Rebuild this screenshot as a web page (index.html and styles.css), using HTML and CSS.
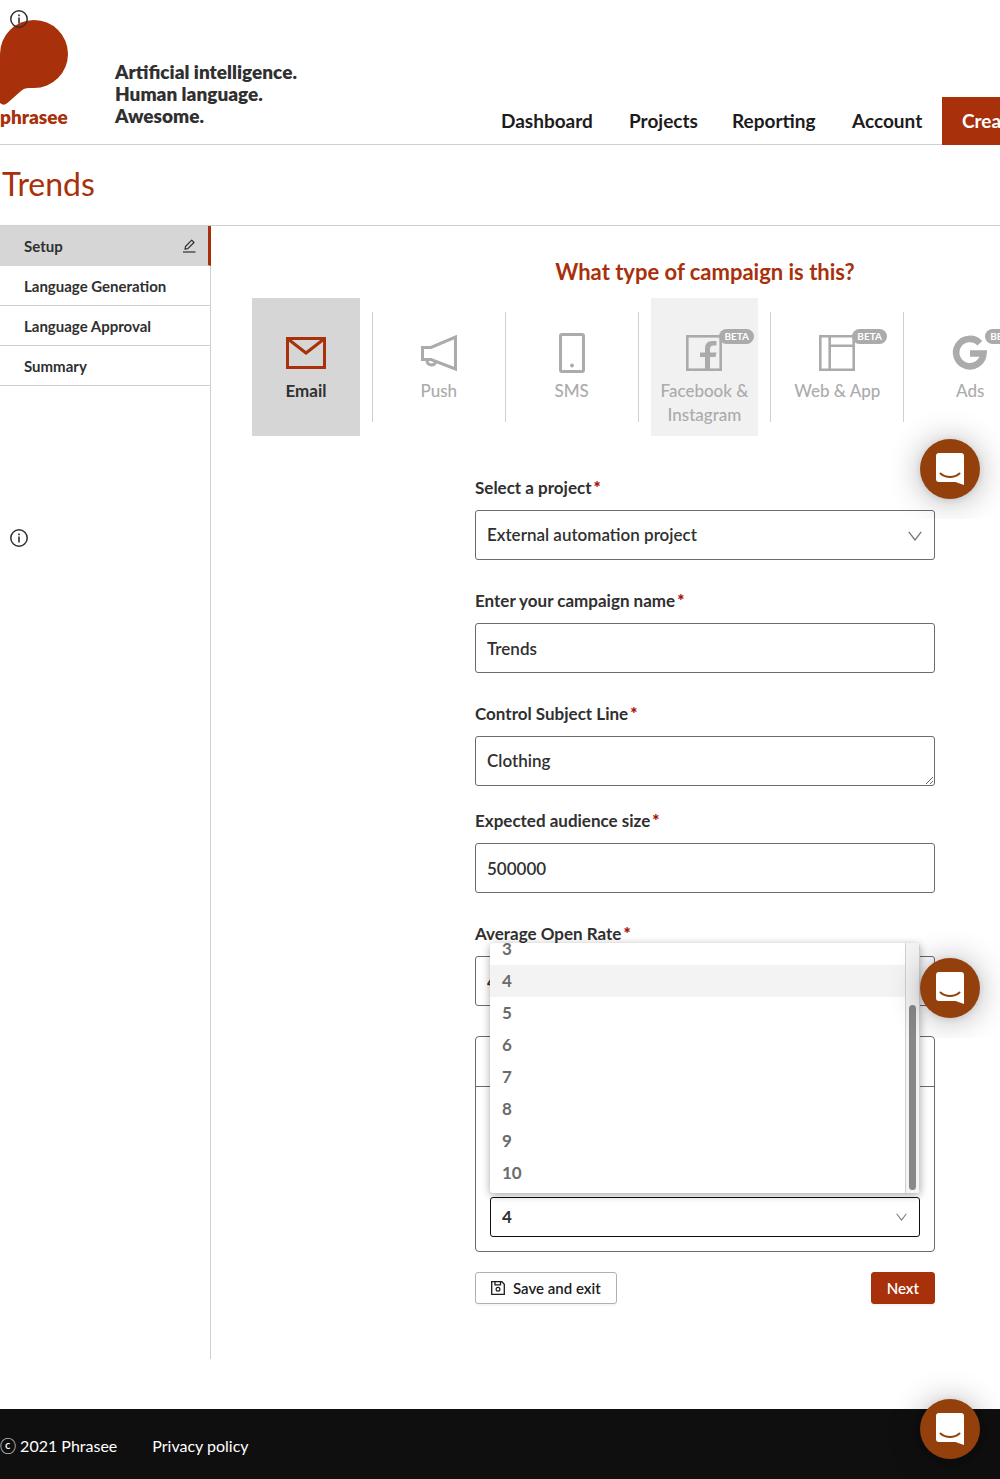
FILE: index.html
```html
<!DOCTYPE html>
<html lang="en">
<head>
<meta charset="utf-8">
<meta name="viewport" content="width=device-width, initial-scale=1">
<title>Trends - Phrasee</title>
<link rel="stylesheet" href="styles.css">
</head>
<body>
<svg class="sprite" aria-hidden="true">
  <symbol id="chat" viewBox="0 0 28 32"><path fill="#fff" d="M3 0H25a3 3 0 0 1 3 3V32L19.500 29H3a3 3 0 0 1-3-3V3a3 3 0 0 1 3-3z"/><path d="M4.500 20.500C10 25.200 18 25.200 23.500 20.500" fill="none" stroke="#94400c" stroke-width="2" stroke-linecap="round"/></symbol>
  <symbol id="info" viewBox="0 0 18 18"><circle cx="9" cy="9" r="8.200" fill="none" stroke="currentColor" stroke-width="1.500"/><path d="M9 7.500V13.500M9 4.500V6.200" stroke="currentColor" stroke-width="1.600"/></symbol>
  <symbol id="chevron" viewBox="0 0 14 10"><path d="M.8.8 7 9 13.200.8" fill="none" stroke="currentColor" stroke-width="1.300"/></symbol>
</svg>
<div class="viewport">
  <div class="app">
    <header class="header">
      <a class="logo" href="#">
        <svg width="68" height="86" viewBox="0 0 68 86" aria-hidden="true"><path fill="currentColor" d="M34 0A34 34 0 0 1 34 68H29Q24 68 21 71L8 82.500Q4 86.500 0 83V34A34 34 0 0 1 34 0Z"/></svg>
        <span class="logo-name">phrasee</span>
      </a>
      <p class="tagline">Artificial intelligence.<br>Human language.<br>Awesome.</p>
      <nav class="nav">
        <a href="#">Dashboard</a>
        <a href="#">Projects</a>
        <a href="#">Reporting</a>
        <a href="#">Account</a>
        <a class="nav-create" href="#">Create</a>
      </nav>
    </header>

    <h1 class="title">Trends</h1>

    <div class="body">
      <aside class="steps">
        <a class="step step-active" href="#">Setup
          <svg width="14" height="14" viewBox="0 0 14 14" aria-hidden="true"><path d="M3 10.200 3.500 7.500 9.700 1.200 12 3.500 5.800 9.700Z" fill="none" stroke="currentColor" stroke-width="1.200" stroke-linejoin="round"/><path d="M1 13H13.500" stroke="currentColor" stroke-width="1.200"/></svg>
        </a>
        <a class="step" href="#">Language Generation</a>
        <a class="step" href="#">Language Approval</a>
        <a class="step" href="#">Summary</a>
      </aside>

      <main class="main">
        <h2 class="question">What type of campaign is this?</h2>
        <ul class="types">
          <li><button class="type type-selected" type="button">
            <span class="type-icon"><svg width="40" height="40" viewBox="0 0 40 40"><path d="M1.500 5.500H38.500V34.500H1.500ZM2 6 20 20 38 6" fill="none" stroke="currentColor" stroke-width="3"/></svg></span>Email</button></li>
          <li><button class="type" type="button">
            <span class="type-icon"><svg width="40" height="40" viewBox="0 0 40 40"><path d="M3.500 14.500H12L36.500 4V36L12 26.500H3.500Z" fill="none" stroke="currentColor" stroke-width="3"/><path d="M8 27.500A4.500 4.500 0 0 0 16.500 29.500" fill="none" stroke="currentColor" stroke-width="3"/></svg></span>Push</button></li>
          <li><button class="type" type="button">
            <span class="type-icon"><svg width="40" height="40" viewBox="0 0 40 40"><rect x="8.500" y="1.500" width="23" height="37" rx="1.500" fill="none" stroke="currentColor" stroke-width="3"/><circle cx="20" cy="32.500" r="1.900" fill="currentColor"/></svg></span>SMS</button></li>
          <li><button class="type type-hover" type="button">
            <span class="type-icon"><svg width="40" height="40" viewBox="0 0 40 40"><rect x="3.300" y="3.300" width="33.400" height="33.400" fill="none" stroke="currentColor" stroke-width="2.600"/><path d="M21 37V24H16V19.500H21V15.500Q21 8 28 8H32.500V12.500H29.500Q26 12.500 26 16V19.500H32.500L31.500 24H26V37Z" fill="currentColor"/></svg><span class="beta">BETA</span></span>Facebook &amp; Instagram</button></li>
          <li><button class="type" type="button">
            <span class="type-icon"><svg width="40" height="40" viewBox="0 0 40 40"><path d="M3.300 3.300H36.700V36.700H3.300ZM12.700 3.300V36.700M12.700 12.800H36.700" fill="none" stroke="currentColor" stroke-width="2.600"/></svg><span class="beta">BETA</span></span>Web &amp; App</button></li>
          <li><button class="type" type="button">
            <span class="type-icon"><svg width="40" height="40" viewBox="0 0 40 40"><path d="M29.800 10.200A13.700 13.700 0 1 0 33.500 20.500H20" fill="none" stroke="currentColor" stroke-width="6.600"/></svg><span class="beta">BETA</span></span>Ads</button></li>
        </ul>

        <form class="form">
          <div class="field">
            <label for="project">Select a project<span class="required">*</span></label>
            <div class="select">
              <select class="control" id="project"><option>External automation project</option></select>
              <svg class="chevron" width="14" height="10"><use href="#chevron"/></svg>
            </div>
          </div>
          <div class="field">
            <label for="name">Enter your campaign name<span class="required">*</span></label>
            <input class="control" id="name" type="text" value="Trends">
          </div>
          <div class="field field-area">
            <label for="subject">Control Subject Line<span class="required">*</span></label>
            <textarea class="control" id="subject" rows="1">Clothing</textarea>
          </div>
          <div class="field">
            <label for="audience">Expected audience size<span class="required">*</span></label>
            <input class="control" id="audience" type="text" value="500000">
          </div>
          <div class="field">
            <label for="rate">Average Open Rate<span class="required">*</span></label>
            <input class="control" id="rate" type="text" value="4">
          </div>
          <section class="panel">
            <div class="panel-head"></div>
            <div class="panel-body">
              <div class="select">
                <select class="control control-open" id="count" aria-label="Count"><option>4</option></select>
                <svg class="chevron chevron-small" width="11" height="8"><use href="#chevron"/></svg>
                <div class="popup">
                  <ul class="options" role="listbox">
                    <li role="option">3</li>
                    <li role="option" class="option-active" aria-selected="true">4</li>
                    <li role="option">5</li>
                    <li role="option">6</li>
                    <li role="option">7</li>
                    <li role="option">8</li>
                    <li role="option">9</li>
                    <li role="option">10</li>
                  </ul>
                  <div class="scrollbar"><div class="thumb"></div></div>
                </div>
              </div>
            </div>
          </section>
          <div class="actions">
            <button class="button" type="button">
              <svg width="14" height="14" viewBox="0 0 14 14" aria-hidden="true"><path d="M.7.7H10.800L13.300 3.200V13.300H.7ZM4 .7V3.800H9.500V.7" fill="none" stroke="currentColor" stroke-width="1.300"/><circle cx="7" cy="8.300" r="1.900" fill="none" stroke="currentColor" stroke-width="1.200"/></svg>
              Save and exit</button>
            <button class="button button-primary" type="submit">Next</button>
          </div>
        </form>
      </main>
    </div>

    <footer class="footer">
      <span><span class="copyright">ⓒ</span> 2021 Phrasee</span>
      <a href="#">Privacy policy</a>
    </footer>
  </div>

  <svg class="info info-top" width="18" height="18"><use href="#info"/></svg>
  <svg class="info info-side" width="18" height="18"><use href="#info"/></svg>
  <button class="chat chat-first" type="button" aria-label="Open chat"><svg width="28" height="32"><use href="#chat"/></svg></button>
  <button class="chat chat-second" type="button" aria-label="Open chat"><svg width="28" height="32"><use href="#chat"/></svg></button>
  <button class="chat chat-last" type="button" aria-label="Open chat"><svg width="28" height="32"><use href="#chat"/></svg></button>
</div>
</body>
</html>
```
FILE: styles.css
```css
:root {
  --brand: #a8300a;
  --text: #303030;
  --line: #cfcfcf;
  --muted: #ababab;
}

* { box-sizing: border-box; }

body {
  margin: 0;
  background: #fff;
  color: var(--text);
  font: 500 16px/24px Lato, "Liberation Sans", sans-serif;
}

h1, h2, p, ul { margin: 0; padding: 0; }
ul { list-style: none; }
a { color: inherit; text-decoration: none; }
button, input, select, textarea { font: inherit; color: inherit; }
.sprite { display: none; }

.viewport { position: relative; overflow: hidden; }
.app { min-width: 1200px; }

/* Header */
.header {
  display: grid;
  grid-template-columns: 115px 386px 1fr;
  align-items: end;
  border-bottom: 1px solid var(--line);
}
.logo {
  display: flex;
  flex-direction: column;
  padding: 20px 0 16px;
  color: var(--brand);
}
.logo-name { font-size: 19px; line-height: 22px; font-weight: 800; }
.tagline { padding-bottom: 17px; font-size: 19px; line-height: 22px; font-weight: 800; }
.nav {
  display: grid;
  grid-template-columns: 128px 103px 120px 90px auto;
  margin-bottom: -1px;
  color: #1c1c1c;
  font-size: 19px;
  line-height: 48px;
  font-weight: 700;
}
.nav-create { padding: 0 20px; background: var(--brand); color: #fff; }

.title {
  padding: 15px 2px 17px;
  border-bottom: 1px solid var(--line);
  color: var(--brand);
  font-size: 32px;
  line-height: 48px;
  font-weight: 400;
}

/* Sidebar */
.body { display: flex; margin-bottom: 50px; }
.steps { width: 211px; border-right: 1px solid var(--line); }
.step {
  display: flex;
  align-items: center;
  justify-content: space-between;
  height: 40px;
  padding: 0 12px 0 24px;
  border-bottom: 1px solid var(--line);
  font-size: 15px;
  font-weight: 700;
}
.step-active {
  margin-right: -1px;
  border-right: 3px solid var(--brand);
  border-bottom-color: #d6d6d6;
  background: #d6d6d6;
}

/* Campaign types */
.main { flex: 1; padding: 34px 30px 55px 29px; }
.question {
  color: var(--brand);
  font-size: 22px;
  line-height: 24px;
  font-weight: 700;
  text-align: center;
}
.types { display: grid; grid-template-columns: repeat(7, 1fr); margin-top: 14px; }
.types li { display: flex; align-items: center; gap: 12px; padding-left: 12px; }
.types li::after { content: ""; width: 1px; height: 110px; background: var(--line); }
.type {
  flex: 1;
  display: flex;
  flex-direction: column;
  align-items: center;
  height: 138px;
  padding: 35px 0 0;
  border: 0;
  background: none;
  color: var(--muted);
  font-size: 17px;
}
.type-icon { position: relative; height: 46px; }
.type-icon svg { display: block; }
.type-hover { background: #f1f1f1; }
.type-selected { background: #d6d6d6; color: var(--text); font-weight: 700; }
.type-selected svg { color: var(--brand); }
.beta {
  position: absolute;
  top: -4px;
  left: 35px;
  padding: 0 5px;
  border-radius: 8px;
  background: var(--muted);
  color: #fff;
  font-size: 10px;
  line-height: 15px;
  font-weight: 700;
}

/* Form */
.form { width: 460px; margin: 30px auto 0; }
.field { margin-bottom: 19px; }
.field-area { margin-bottom: 13px; }
.field label { display: block; line-height: 44px; font-weight: 700; font-size: 17px; }
.required { margin-left: 2px; color: #a80f00; font-weight: 900; }
.select { position: relative; }
.control {
  display: block;
  width: 100%;
  height: 50px;
  padding: 0 11px;
  border: 1px solid #6b6b6b;
  border-radius: 3px;
  outline: 0;
  background: #fff;
  appearance: none;
  font-size: 17px;
  font-weight: 600;
}
textarea.control { padding-top: 12px; resize: vertical; }
.chevron { position: absolute; top: 21px; right: 13px; color: #777; }
.panel { margin-top: 30px; border: 1px solid #6b6b6b; border-radius: 4px; }
.panel-head { height: 50px; border-bottom: 1px solid #6b6b6b; }
.panel-body { padding: 110px 14px 14px; }
.control-open { height: 40px; border-color: #0b0f1c; font-weight: 700; }
.chevron-small { top: 16px; }

.popup {
  position: absolute;
  right: 0;
  bottom: calc(100% + 4px);
  left: 0;
  display: flex;
  height: 250px;
  overflow: hidden;
  border-radius: 4px;
  background: #fff;
}
.select:has(.popup)::before {
  content: "";
  position: absolute;
  right: 0;
  bottom: calc(100% + 4px);
  left: 0;
  height: 250px;
  border-radius: 4px;
  box-shadow: 0 2px 8px rgba(0, 0, 0, .35);
}
.options {
  flex: 1;
  display: flex;
  flex-direction: column;
  justify-content: flex-end;
  padding-bottom: 4px;
  color: #6b6b6b;
  font-size: 17px;
  line-height: 32px;
  font-weight: 700;
}
.options li { padding: 0 12px; }
.option-active { background: #f3f3f3; }
.scrollbar {
  display: flex;
  align-items: flex-end;
  width: 15px;
  padding: 3px;
  border: solid #d0d0d0;
  border-width: 0 1px;
  background: #f3f3f3;
}
.thumb { width: 8px; height: 185px; border-radius: 4px; background: #888; }

.actions { display: flex; justify-content: space-between; margin-top: 20px; }
.button {
  display: flex;
  align-items: center;
  gap: 8px;
  height: 32px;
  padding: 0 15px;
  border: 1px solid #b0b0b0;
  border-radius: 3px;
  background: #fff;
  box-shadow: 0 2px 0 rgba(0, 0, 0, .04);
  color: #1c1c1c;
  font-size: 15px;
  font-weight: 600;
}
.button-primary { border-color: var(--brand); background: var(--brand); color: #fff; }

.footer {
  display: flex;
  gap: 35px;
  padding: 22px 0 18px;
  background: #0f0f0f;
  color: #fff;
  font-size: 16px;
  line-height: 30px;
  font-weight: 400;
}
.copyright { font-family: "Noto Sans CJK JP", sans-serif; line-height: 1; }

/* Floating items */
.info { position: absolute; left: 10px; }
.info-top { top: 10px; }
.info-side { top: 529px; }
.chat {
  position: absolute;
  right: 20px;
  display: grid;
  place-items: center;
  width: 60px;
  height: 60px;
  padding: 0;
  border: 0;
  border-radius: 50%;
  background: #94400c;
  box-shadow: 0 1px 6px rgba(0, 0, 0, .1), 0 2px 32px rgba(0, 0, 0, .3);
  clip-path: inset(-60px -20px -20px -60px);
}
.chat-first { top: 439px; }
.chat-second { top: 958px; }
.chat-last { bottom: 20px; }
```
